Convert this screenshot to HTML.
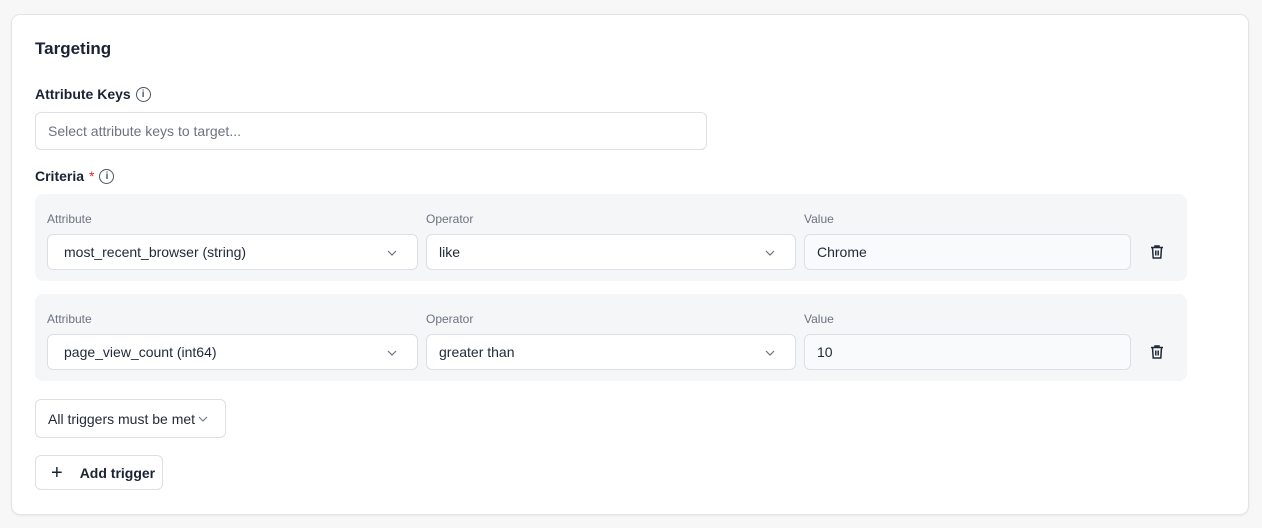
<!DOCTYPE html>
<html><head><style>
*{box-sizing:border-box;margin:0;padding:0}
body{width:1262px;height:528px;background:#f7f7f8;font-family:"Liberation Sans",sans-serif;color:#1f2937;position:relative;overflow:hidden}
.card{position:absolute;left:11px;top:14px;width:1238px;height:501px;background:#fff;border:1px solid #e2e4e8;border-radius:9px;box-shadow:0 1px 2px rgba(0,0,0,.06)}
.a{position:absolute}
.t{font-size:17px;font-weight:bold;color:#1a2233}
.lbl{font-size:14px;font-weight:bold;color:#1a2233;display:flex;align-items:center;gap:5px}
.info{width:15px;height:15px;border:1.3px solid #4b5563;border-radius:50%;font-size:10px;display:inline-flex;align-items:center;justify-content:center;color:#4b5563;font-weight:bold}
.box{border:1px solid #dcdfe4;border-radius:6px;background:#fff;font-size:14px;display:flex;align-items:center}
.row{background:#f5f6f8;border-radius:8px}
.sm{font-size:12px;color:#6b7280}
.chev{position:absolute;right:19px;top:12px}
</style></head><body>
<div class="card"></div>
<div class="a t" style="left:35px;top:39px">Targeting</div>
<div class="a lbl" style="left:35px;top:86px">Attribute Keys <span class="info">i</span></div>
<div class="a box" style="left:35px;top:112px;width:672px;height:38px;padding-left:12px;color:#6b7280">Select attribute keys to target...</div>
<div class="a lbl" style="left:35px;top:168px">Criteria <span style="color:#dc2626;font-weight:normal">*</span><span class="info">i</span></div>

<div class="a row" style="left:35px;top:194px;width:1152px;height:87px"></div>
<div class="a row" style="left:35px;top:294px;width:1152px;height:87px"></div>

<div class="a sm" style="left:47px;top:212px">Attribute</div>
<div class="a sm" style="left:426px;top:212px">Operator</div>
<div class="a sm" style="left:804px;top:212px">Value</div>
<div class="a box" style="left:47px;top:234px;width:371px;height:36px;padding-left:16px">most_recent_browser (string)<svg class="chev" width="12" height="12" viewBox="0 0 12 12"><path d="M2 4l4 4 4-4" fill="none" stroke="#6b7280" stroke-width="1.2"/></svg></div>
<div class="a box" style="left:426px;top:234px;width:370px;height:36px;padding-left:12px">like<svg class="chev" width="12" height="12" viewBox="0 0 12 12"><path d="M2 4l4 4 4-4" fill="none" stroke="#6b7280" stroke-width="1.2"/></svg></div>
<div class="a box" style="left:804px;top:234px;width:327px;height:36px;padding-left:12px;background:#f9fafb">Chrome</div>

<div class="a sm" style="left:47px;top:312px">Attribute</div>
<div class="a sm" style="left:426px;top:312px">Operator</div>
<div class="a sm" style="left:804px;top:312px">Value</div>
<div class="a box" style="left:47px;top:334px;width:371px;height:36px;padding-left:16px">page_view_count (int64)<svg class="chev" width="12" height="12" viewBox="0 0 12 12"><path d="M2 4l4 4 4-4" fill="none" stroke="#6b7280" stroke-width="1.2"/></svg></div>
<div class="a box" style="left:426px;top:334px;width:370px;height:36px;padding-left:12px">greater than<svg class="chev" width="12" height="12" viewBox="0 0 12 12"><path d="M2 4l4 4 4-4" fill="none" stroke="#6b7280" stroke-width="1.2"/></svg></div>
<div class="a box" style="left:804px;top:334px;width:327px;height:36px;padding-left:12px;background:#f9fafb">10</div>

<svg class="a" style="left:1149px;top:244px" width="16" height="16" viewBox="0 0 16 16"><path d="M2 3.5h12M6 3.5V2h4v1.5M3.5 3.5l.7 10.5h7.6l.7-10.5M6.8 6.5v5M9.2 6.5v5" fill="none" stroke="#1f2937" stroke-width="1.5"/></svg>
<svg class="a" style="left:1149px;top:344px" width="16" height="16" viewBox="0 0 16 16"><path d="M2 3.5h12M6 3.5V2h4v1.5M3.5 3.5l.7 10.5h7.6l.7-10.5M6.8 6.5v5M9.2 6.5v5" fill="none" stroke="#1f2937" stroke-width="1.5"/></svg>

<div class="a box" style="left:35px;top:399px;width:191px;height:39px;padding-left:12px">All triggers must be met<svg style="margin-left:3px" width="10" height="10" viewBox="0 0 10 10"><path d="M1 3l4 4 4-4" fill="none" stroke="#6b7280" stroke-width="1.1"/></svg></div>
<div class="a box" style="left:35px;top:455px;width:128px;height:35px;padding-left:15px;font-weight:bold;color:#1a2233"><span style="font-weight:normal;font-size:20px;margin-right:17px;line-height:1">+</span>Add trigger</div>
</body></html>
